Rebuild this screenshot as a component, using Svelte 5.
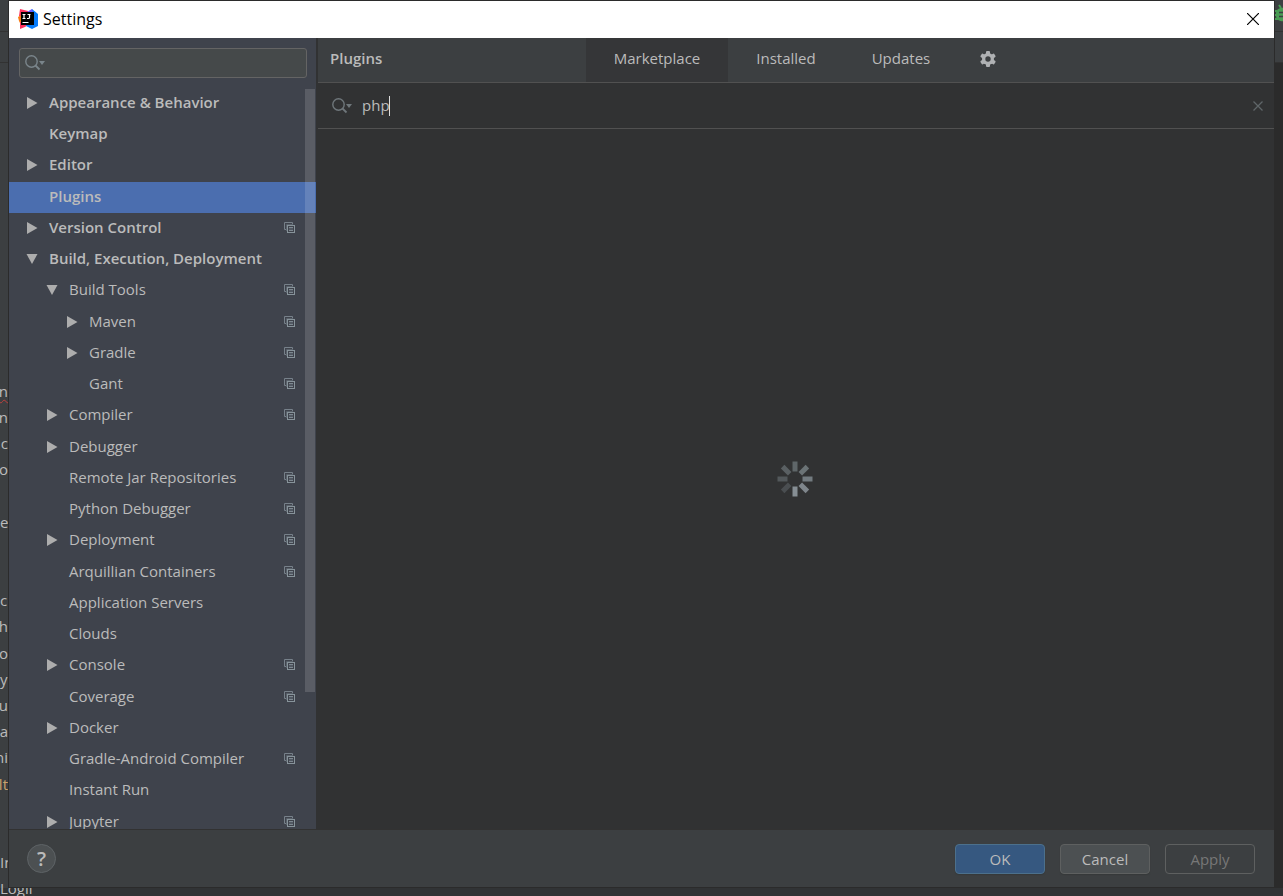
<script>
  const tree = [
    { label: 'Appearance & Behavior', level: 0, state: 'closed' },
    { label: 'Keymap', level: 0 },
    { label: 'Editor', level: 0, state: 'closed' },
    { label: 'Plugins', level: 0 },
    { label: 'Version Control', level: 0, state: 'closed', project: true },
    { label: 'Build, Execution, Deployment', level: 0, state: 'open' },
    { label: 'Build Tools', level: 1, state: 'open', project: true },
    { label: 'Maven', level: 2, state: 'closed', project: true },
    { label: 'Gradle', level: 2, state: 'closed', project: true },
    { label: 'Gant', level: 2, project: true },
    { label: 'Compiler', level: 1, state: 'closed', project: true },
    { label: 'Debugger', level: 1, state: 'closed' },
    { label: 'Remote Jar Repositories', level: 1, project: true },
    { label: 'Python Debugger', level: 1, project: true },
    { label: 'Deployment', level: 1, state: 'closed', project: true },
    { label: 'Arquillian Containers', level: 1, project: true },
    { label: 'Application Servers', level: 1 },
    { label: 'Clouds', level: 1 },
    { label: 'Console', level: 1, state: 'closed', project: true },
    { label: 'Coverage', level: 1, project: true },
    { label: 'Docker', level: 1, state: 'closed' },
    { label: 'Gradle-Android Compiler', level: 1, project: true },
    { label: 'Instant Run', level: 1 },
    { label: 'Jupyter', level: 1, state: 'closed', project: true }
  ];

  const tabs = ['Marketplace', 'Installed', 'Updates'];

  // ends of the editor lines that stick out behind the dialog
  const editorLines = [
    { text: 'n', error: true },
    { text: 'n' },
    { text: '.c' },
    { text: 'o' },
    { text: '' },
    { text: 'e:', start: true },
    { text: '' },
    { text: '' },
    { text: 'ch', start: true },
    { text: 'th' },
    { text: 'o' },
    { text: 'yp' , start: true },
    { text: 'u' },
    { text: 'ra' },
    { text: 'ni' },
    { text: 'lt', tan: true },
    { text: '' },
    { text: '' },
    { text: 'In', start: true },
    { text: 'Logii', start: true }
  ];

  const spokes = ['#5f6669', '#6b7376', '#737b80', '#7f868c', '#868e94', '#4a4e51', '#53585b', '#5a6063'];

  let selected = 'Plugins';
  let activeTab = 'Marketplace';
  let settingsQuery = '';
  let query = 'php';
</script>

<div class="desktop">
  <div class="editor">
    <div class="editor__toolbar">
      <svg class="editor__bug" width="16" height="18" viewBox="0 0 16 18" aria-hidden="true">
        <path d="M4 1l2 3M12 1l-2 3M0 7h3M0 11h3M0 15h3" stroke="#499c54" stroke-width="2" fill="none" />
        <path d="M1 9c0-7 14-7 14 0v3c0 7-14 7-14 0z" fill="#499c54" />
        <path d="M4 8.500h8M4 12.500h8" stroke="#3c3f41" stroke-width="1.600" />
      </svg>
    </div>
    <div class="editor__crumbs"></div>
    <div class="editor__body">
      <div class="editor__lines">
        {#each editorLines as line}
          <div class="editor__line" class:editor__line--start={line.start} class:editor__line--error={line.error} class:editor__line--tan={line.tan}>{line.text}</div>
        {/each}
      </div>
    </div>
  </div>

  <div class="dialog" role="dialog" aria-labelledby="dialog-title">
    <header class="titlebar">
      <svg width="20" height="20" viewBox="0 0 20 20" aria-hidden="true">
        <path d="M2 0l8 2v5H1z" fill="#fe315d" />
        <path d="M0 8l5-3v10l-3-1-1-2z" fill="#f97a12" />
        <path d="M2 13l8 3-3 2-5 2z" fill="#fe315d" />
        <path d="M14 0l6 5v12l-6 3-6-3z" fill="#087cfa" />
        <path d="M9 3l5-3 1 4z" fill="#6b57ff" />
        <rect x="3" y="3" width="13" height="13" fill="#000" />
        <path d="M4.500 5.500h3M6 5.500v4M4.500 9.500h3M9.500 5.500h3M11.500 5.500v3q0 1-1 1h-1.500M4.500 13.500h6" stroke="#fff" stroke-width="1.200" fill="none" />
      </svg>
      <h1 id="dialog-title" class="titlebar__text">Settings</h1>
      <button type="button" class="titlebar__close" aria-label="Close">
        <svg width="12" height="12" viewBox="0 0 12 12"><path d="M0 0l12 12M12 0L0 12" stroke="#000" stroke-width="1.200" /></svg>
      </button>
    </header>

    <div class="main">
      <aside class="sidebar">
        <label class="search">
          <svg width="22" height="16" viewBox="0 0 22 16" aria-hidden="true">
            <circle cx="6.500" cy="6.500" r="5.700" fill="none" stroke="#7a858b" stroke-width="1.400" />
            <path d="M10.500 10.500l4 4" stroke="#7a858b" stroke-width="1.800" />
            <path d="M14 6h6l-3 4z" fill="#7a858b" />
          </svg>
          <input type="text" class="search__input" aria-label="Search settings" bind:value={settingsQuery} />
        </label>

        <div class="tree">
          <ul class="tree__list">
            {#each tree as item}
              <li class="tree__item">
                <button type="button" class="row row--level-{item.level}" class:row--selected={selected === item.label} on:click={() => (selected = item.label)}>
                  <svg class="row__arrow" width="12" height="12" viewBox="0 0 12 12" aria-hidden="true">
                    {#if item.state === 'closed'}
                      <path d="M0 0l10.500 6L0 12z" fill="#adadad" />
                    {:else if item.state === 'open'}
                      <path d="M-.5 1h11L5 11z" fill="#adadad" />
                    {/if}
                  </svg>
                  <span class="row__label">{item.label}</span>
                  {#if item.project}
                    <svg width="12" height="12" viewBox="0 0 12 12" aria-hidden="true">
                      <path d="M2 7.500H.5v-7h8V2" fill="none" stroke="#77818a" />
                      <path d="M2.500 9V2.500H9" fill="none" stroke="#59616a" />
                      <rect x="3.500" y="3.500" width="7" height="7" fill="#3f434c" stroke="#87939a" />
                      <path d="M5 5.500h4M5 8.500h4" stroke="#7d8890" />
                      <path d="M5 7h4" stroke="#66707a" />
                    </svg>
                  {/if}
                </button>
              </li>
            {/each}
          </ul>
          <div class="tree__thumb"></div>
        </div>
      </aside>

      <section class="content">
        <div class="content__head">
          <h2 class="content__title">Plugins</h2>
          <div class="tabs" role="tablist">
            {#each tabs as tab}
              <button type="button" role="tab" aria-selected={activeTab === tab} class="tab" class:tab--active={activeTab === tab} on:click={() => (activeTab = tab)}>{tab}</button>
            {/each}
            <button type="button" class="gear" aria-label="Plugin settings">
              <svg width="16" height="16" viewBox="0 0 16 16">
                <g fill="#afb1b3">
                  <circle cx="8" cy="8" r="6" />
                  {#each [0, 60, 120] as angle}
                    <rect x="6" y="0" width="4" height="16" rx="1" transform="rotate({angle} 8 8)" />
                  {/each}
                </g>
                <circle cx="8" cy="8" r="2.700" fill="#3c3f41" />
              </svg>
            </button>
          </div>
        </div>

        <div class="query">
          <svg width="22" height="16" viewBox="0 0 22 16" aria-hidden="true">
            <circle cx="6.500" cy="6.500" r="5.700" fill="none" stroke="#6f777b" stroke-width="1.400" />
            <path d="M10.500 10.500l4 4" stroke="#6f777b" stroke-width="1.800" />
            <path d="M14 6h6l-3 4z" fill="#6f777b" />
          </svg>
          <input type="text" class="query__input" aria-label="Search plugins" bind:value={query} />
          <span class="query__caret"></span>
          <button type="button" class="query__clear" aria-label="Clear search" on:click={() => (query = '')}>
            <svg width="10" height="10" viewBox="0 0 10 10"><path d="M.5.5l9 9M9.500.5l-9 9" stroke="#5f6669" stroke-width="1.300" /></svg>
          </button>
        </div>

        <div class="results">
          <svg width="36" height="36" viewBox="0 0 36 36" role="img" aria-label="Loading">
            {#each spokes as color, i}
              <rect x="15.500" y="0.500" width="5" height="10" fill={color} transform="rotate({i * 45} 18 18)" />
            {/each}
          </svg>
        </div>
      </section>
    </div>

    <footer class="footer">
      <button type="button" class="help" aria-label="Help">?</button>
      <button type="button" class="button button--primary">OK</button>
      <button type="button" class="button">Cancel</button>
      <button type="button" class="button" disabled>Apply</button>
    </footer>
  </div>
</div>

<style>
  :global(body) {
    background: #2b2b2b;
  }

  .desktop {
    position: relative;
    display: flex;
    min-height: 100vh;
    overflow: hidden;
    font-family: "Open Sans", "Noto Sans", sans-serif;
    font-size: 15px;
    color: #bbbbbb;
  }

  button, input {
    margin: 0;
    padding: 0;
    border: none;
    background: none;
    font: inherit;
    color: inherit;
    outline: none;
  }

  svg {
    display: block;
    flex: none;
  }

  .editor {
    position: absolute;
    inset: 0;
    display: flex;
    flex-direction: column;
    background: #3c3f41;
  }

  .editor__toolbar {
    display: flex;
    justify-content: flex-end;
    height: 31px;
    border-bottom: 1px solid #323232;
  }

  .editor__bug {
    margin: 4px -8px 0 0;
  }

  .editor__crumbs {
    height: 30px;
    border-bottom: 1px solid #323232;
  }

  .editor__body {
    flex: 1;
    background: linear-gradient(90deg, #3c3f41 50%, #2b2b2b 50%);
    border-bottom: 8px solid #313335;
  }

  .editor__lines {
    padding-top: 315px;
    height: 0;
  }

  .editor__line {
    display: flex;
    justify-content: flex-end;
    width: 8px;
    height: 26px;
    line-height: 26px;
    white-space: pre;
  }

  .editor__line:nth-child(5n) {
    height: 27px;
  }

  .editor__line--start {
    justify-content: flex-start;
  }

  .editor__line--error {
    text-decoration: underline wavy #bc3f3c 1px;
    text-underline-offset: 2px;
  }

  .editor__line--tan {
    color: #c9a26d;
  }

  .dialog {
    position: relative;
    flex: 1;
    min-width: 0;
    display: flex;
    flex-direction: column;
    margin: 1px 9px 9px;
    box-shadow: 0 0 0 1px #2b2b2b;
    background: #3c3f41;
  }

  .titlebar {
    display: flex;
    align-items: center;
    gap: 5px;
    height: 35px;
    padding: 0 15px 2px 9px;
    background: #ffffff;
    color: #000000;
  }

  .titlebar__text {
    flex: 1;
    margin: 0;
    font-size: 16px;
    font-weight: 400;
  }

  .main {
    flex: 1;
    min-height: 0;
    display: flex;
    background: #313233;
  }

  .sidebar {
    flex: none;
    display: flex;
    flex-direction: column;
    width: 307px;
    margin-right: 2px;
    background: #3f434c;
  }

  .search {
    display: flex;
    align-items: center;
    gap: 5px;
    height: 28px;
    margin: 10px 9px 0 10px;
    padding-left: 5px;
    border: 1px solid #646464;
    border-radius: 3px;
    background: #45494a;
  }

  .search__input {
    flex: 1;
    min-width: 0;
  }

  .tree {
    position: relative;
    flex: 1 0 0;
    margin-top: 10px;
    overflow: hidden;
  }

  .tree__list {
    height: 0;
    margin: 0;
    padding: 0;
    list-style: none;
  }

  .tree__item {
    display: flex;
    height: 31px;
  }

  .tree__item:nth-child(4n + 3) {
    height: 32px;
  }

  .row {
    flex: 1;
    display: flex;
    align-items: center;
    padding-bottom: 2px;
    padding-right: 20px;
    text-align: left;
  }

  .row--level-0 {
    padding-left: 18px;
    font-weight: 600;
  }

  .row--level-1 {
    padding-left: 38px;
  }

  .row--level-2 {
    padding-left: 58px;
  }

  .row--selected {
    background: #4b6eaf;
  }

  .row__arrow {
    margin-right: 10px;
    overflow: visible;
  }

  .row__label {
    flex: 1;
    padding-bottom: 2px;
    line-height: 22px;
    white-space: nowrap;
  }

  .tree__thumb {
    position: absolute;
    top: 1px;
    right: 1px;
    width: 10px;
    height: 603px;
    background: rgba(255, 255, 255, 0.14);
  }

  .content {
    flex: 1;
    min-width: 0;
    display: flex;
    flex-direction: column;
  }

  .content__head {
    display: grid;
    grid-template-columns: 1fr auto 1fr;
    height: 44px;
    padding-left: 12px;
    padding-right: 12px;
    border-bottom: 1px solid #515151;
    background: #3c3f41;
  }

  .content__title {
    align-self: center;
    margin: 0 0 4px;
    font-size: 15px;
    font-weight: 600;
  }

  .tabs {
    display: flex;
  }

  .tab {
    padding: 0 28px 4px;
  }

  .tab--active {
    background: #353638;
  }

  .gear {
    padding: 0 10px 2px 22px;
  }

  .query {
    display: flex;
    align-items: center;
    height: 45px;
    padding: 0 11px 0 14px;
    border-bottom: 1px solid #515151;
  }

  .query__input {
    field-sizing: content;
    margin-left: 8px;
    padding-bottom: 2px;
  }

  .query__caret {
    width: 1px;
    height: 20px;
    margin-left: -1px;
    background: #dddddd;
  }

  .query__clear {
    margin-left: auto;
  }

  .results {
    flex: 1;
    display: flex;
    align-items: center;
    justify-content: center;
    padding-right: 2px;
  }

  .footer {
    display: flex;
    align-items: center;
    gap: 15px;
    height: 58px;
    padding: 0 19px 0 18px;
    box-sizing: border-box;
    border-top: 1px solid #323232;
  }

  .help {
    width: 29px;
    height: 29px;
    margin-right: auto;
    border: 1px solid #5e6366;
    border-radius: 50%;
    background: #4c5052;
    font-size: 20px;
    font-weight: 600;
    line-height: 27px;
  }

  .button {
    width: 90px;
    height: 30px;
    border: 1px solid #5e6060;
    border-radius: 4px;
    background: #4c5052;
    box-shadow: 0 1px 1px #36393a;
  }

  .button--primary {
    border-color: #4c708c;
    background: #365880;
  }

  .button:disabled {
    background: #3c3f41;
    box-shadow: none;
    color: #777777;
  }
</style>
